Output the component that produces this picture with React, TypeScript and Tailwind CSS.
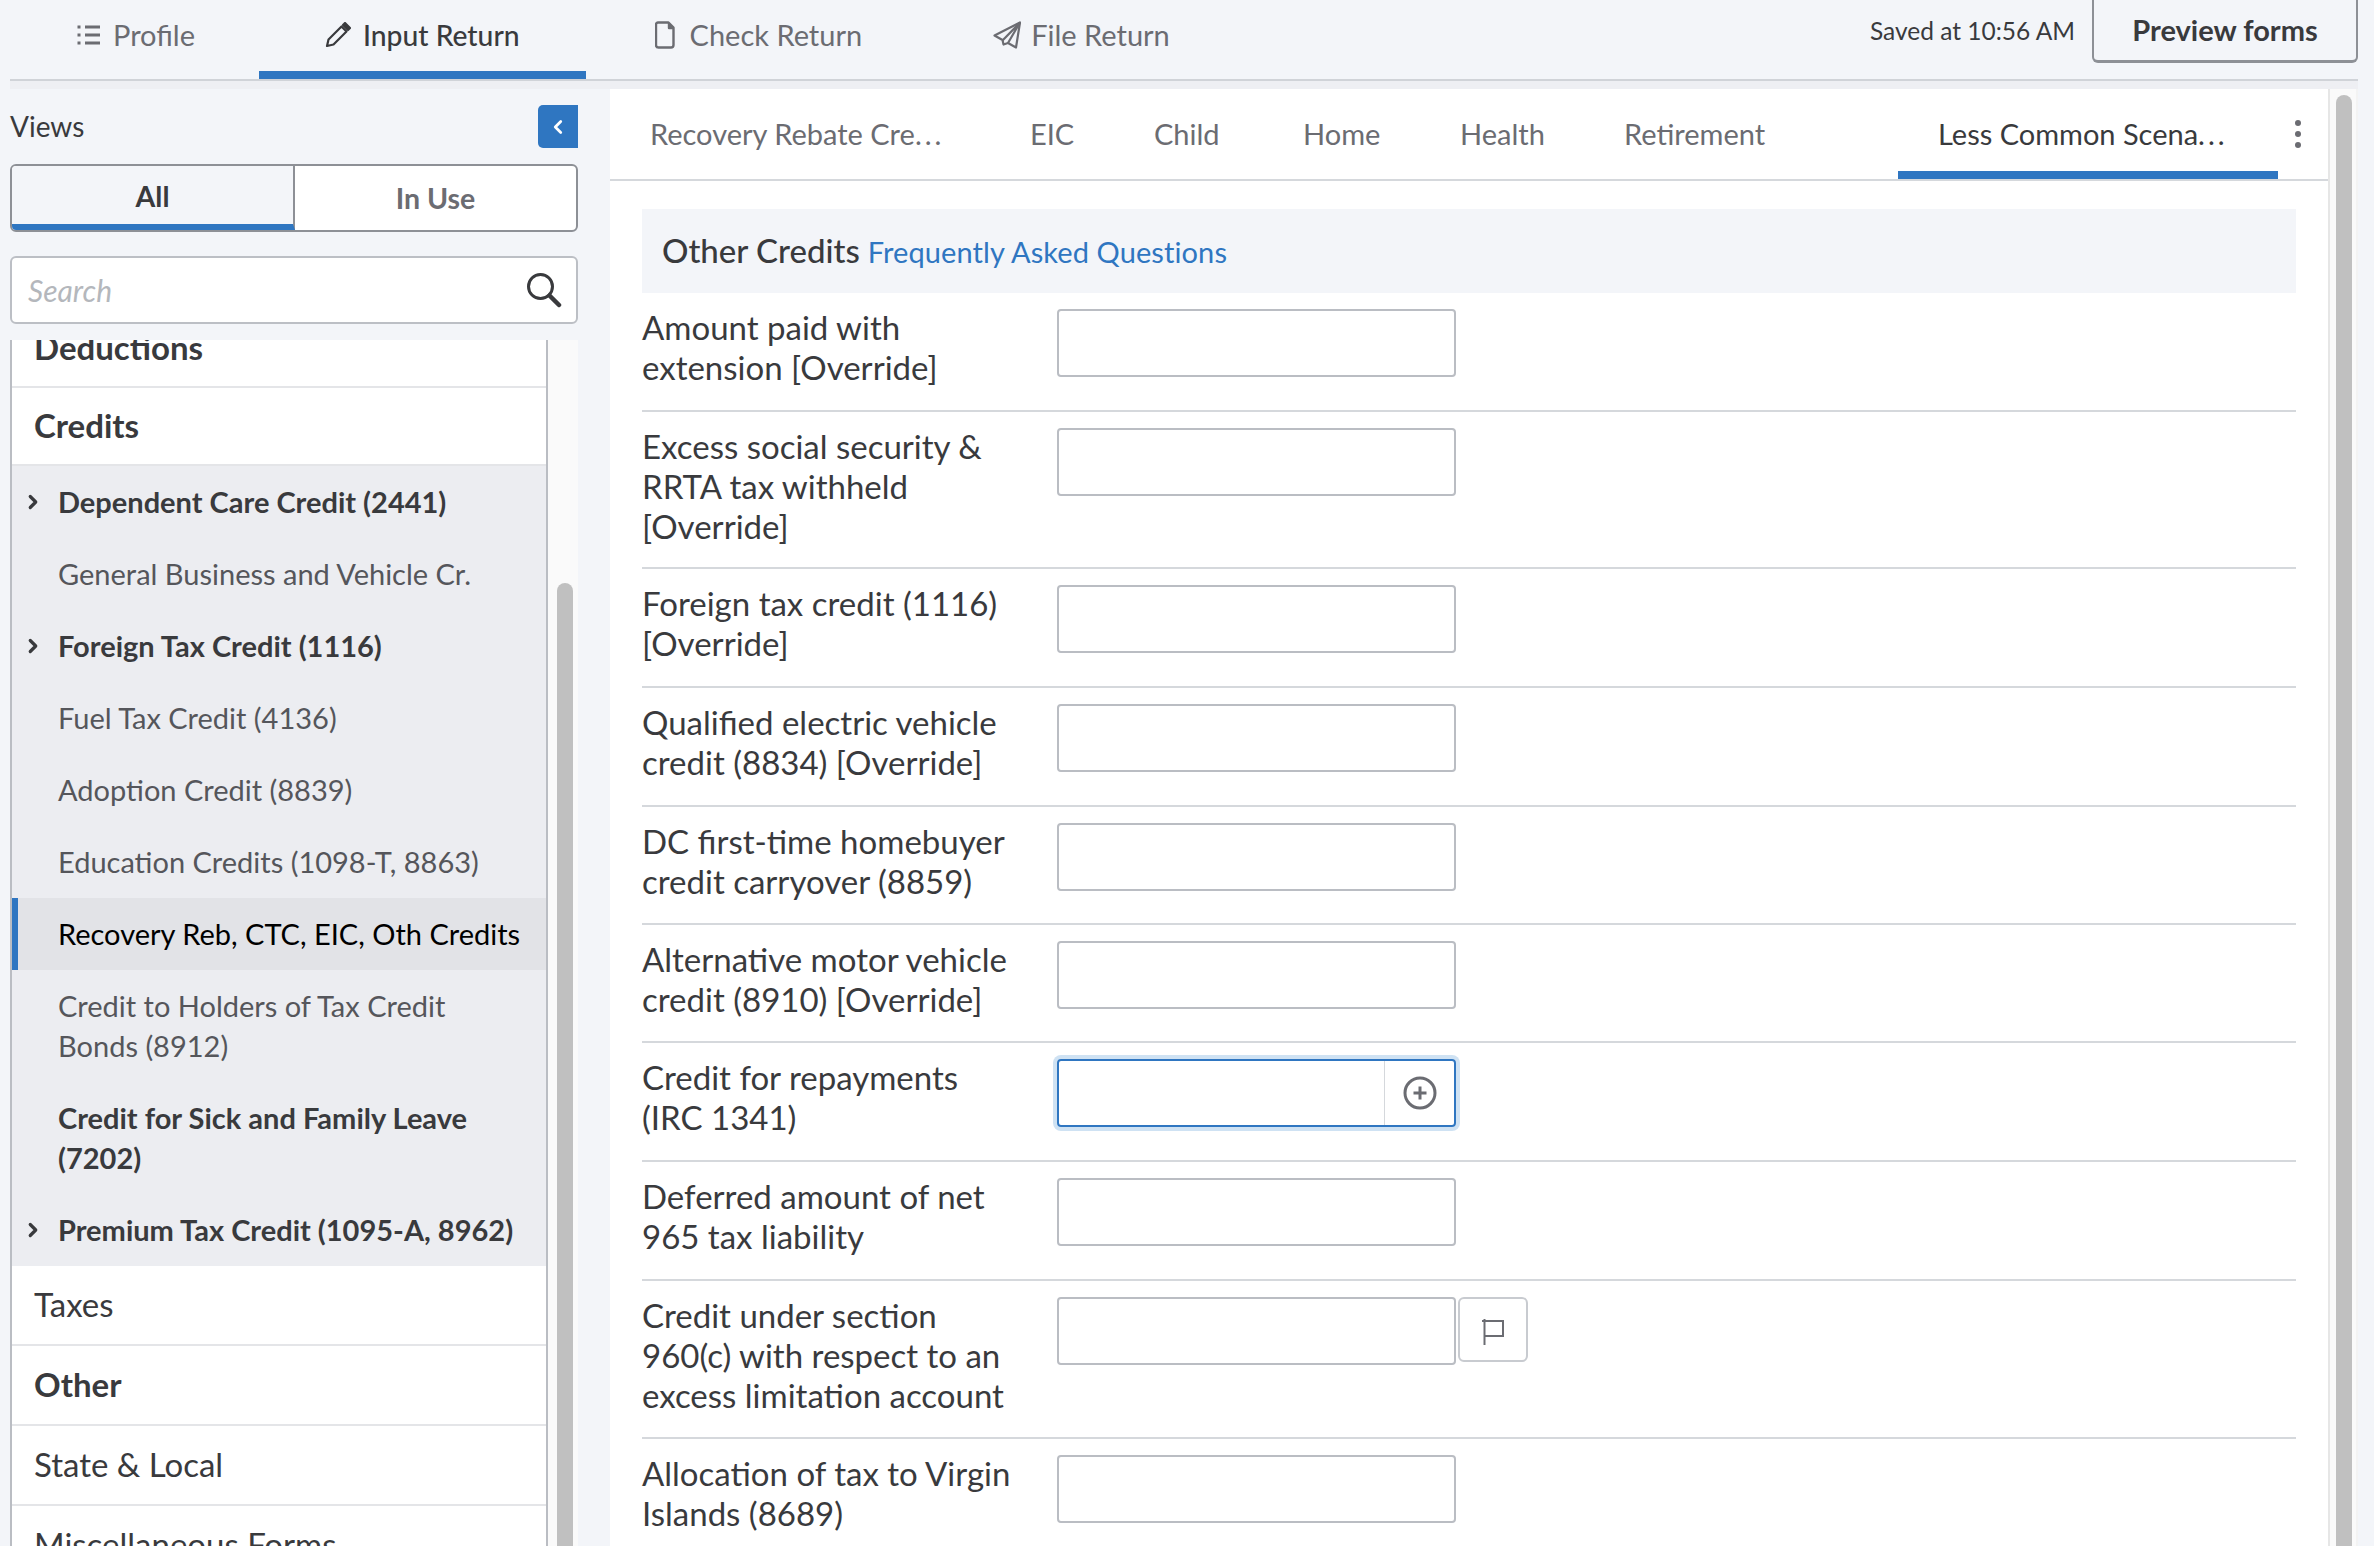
import { ChevronLeft, ChevronRight } from "lucide-react";

const sideItems = [
  { label: "Dependent Care Credit (2441)", bold: true, arrow: true },
  { label: "General Business and Vehicle Cr." },
  { label: "Foreign Tax Credit (1116)", bold: true, arrow: true },
  { label: "Fuel Tax Credit (4136)" },
  { label: "Adoption Credit (8839)" },
  { label: "Education Credits (1098-T, 8863)" },
  { label: "Recovery Reb, CTC, EIC, Oth Credits", active: true },
  { label: "Credit to Holders of Tax Credit\nBonds (8912)" },
  { label: "Credit for Sick and Family Leave\n(7202)", bold: true },
  { label: "Premium Tax Credit (1095-A, 8962)", bold: true, arrow: true },
];

// pad is the bottom padding of the row, the rows in the picture are not all the same height
const formRows = [
  { label: "Amount paid with\nextension [Override]", pad: "pb-[21px]" },
  { label: "Excess social security &\nRRTA tax withheld\n[Override]", pad: "pb-[19px]" },
  { label: "Foreign tax credit (1116)\n[Override]", pad: "pb-[21px]" },
  { label: "Qualified electric vehicle\ncredit (8834) [Override]", pad: "pb-[21px]" },
  { label: "DC first-time homebuyer\ncredit carryover (8859)", pad: "pb-[20px]" },
  { label: "Alternative motor vehicle\ncredit (8910) [Override]", pad: "pb-[20px]" },
  { label: "Credit for repayments\n(IRC 1341)", pad: "pb-[21px]", focused: true },
  { label: "Deferred amount of net\n965 tax liability", pad: "pb-[21px]" },
  { label: "Credit under section\n960(c) with respect to an\nexcess limitation account", pad: "pb-[20px]", flag: true },
  { label: "Allocation of tax to Virgin\nIslands (8689)", pad: "pb-[21px]" },
];

const ListIcon = () => (
  <svg width="24" height="24" viewBox="0 0 24 24" fill="none" stroke="#6b6c72" strokeWidth="3">
    <path d="M8 4h15M8 12h15M8 20h15" />
    <path d="M0.5 4h3M0.5 12h3M0.5 20h3" />
  </svg>
);

const PenIcon = () => (
  <svg width="26" height="26" viewBox="0 0 26 26" fill="none" stroke="#393a3d" strokeWidth="2.2" strokeLinejoin="round">
    <path d="M2 24l1.5-6.5L16.5 4.5l5 5L8.5 22.5z" />
    <path d="M18 3l2-2 5 5-2 2z" fill="#393a3d" />
  </svg>
);

const PageIcon = () => (
  <svg width="20" height="28" viewBox="0 0 20 28" fill="none" stroke="#6b6c72" strokeWidth="2.4" strokeLinejoin="round">
    <path d="M3 1.5h10.5l5 5V24a2.5 2.5 0 0 1-2.5 2.5H3.5A2.5 2.5 0 0 1 1 24V3.5a2 2 0 0 1 2-2z" />
    <path d="M14 2v5h4.5" fill="#6b6c72" />
  </svg>
);

const PlaneIcon = () => (
  <svg width="28" height="28" viewBox="0 0 28 28" fill="none" stroke="#6b6c72" strokeWidth="2.2" strokeLinejoin="round">
    <path d="M1.5 14.5L27 1.5l-4 25-8-4.5-4.5 1.5-1-4.5z" />
    <path d="M27 1.5L9.5 19.5M27 1.5L15 22" />
  </svg>
);

const SearchIcon = () => (
  <svg width="36" height="36" viewBox="0 0 36 36" fill="none" stroke="#393a3d">
    <circle cx="14.5" cy="14.5" r="12" strokeWidth="3" />
    <path d="M23.5 23.5L33 33" strokeWidth="4.5" strokeLinecap="round" />
  </svg>
);

const FlagIcon = () => (
  <svg width="22" height="26" viewBox="0 0 22 26" fill="none" stroke="#6b6c72" strokeWidth="2" className="mt-[5px]">
    <path d="M2.5 0v26" />
    <path d="M0 2h21v15H2.5" />
  </svg>
);

const PlusCircle = () => (
  <svg width="34" height="34" viewBox="0 0 34 34" fill="none" stroke="#6b6c72">
    <circle cx="17" cy="17" r="15" strokeWidth="3" />
    <path d="M17 10.5v13M10.5 17h13" strokeWidth="3" />
  </svg>
);

function TopTab({
  icon,
  label,
  className,
  active,
}: {
  icon: React.ReactNode;
  label: string;
  className: string;
  active?: boolean;
}) {
  return (
    <div
      className={`flex h-[79px] items-start pt-[16px] leading-[38px] ${className} ${
        active ? "border-b-8 border-[#2f76c1] text-[28.25px] font-medium text-[#393a3d]" : "text-[29px] text-[#6b6c72]"
      }`}
    >
      <span className="flex h-[38px] items-center">{icon}</span>
      <span className="whitespace-nowrap">{label}</span>
    </div>
  );
}

function FormTab({ children, className, active }: { children: React.ReactNode; className: string; active?: boolean }) {
  return (
    <div
      className={`h-[90px] shrink-0 pt-[27px] text-[29px] leading-[36px] whitespace-nowrap ${className} ${
        active ? "border-b-8 border-[#2f76c1] text-[#393a3d]" : "text-[#6b6c72]"
      }`}
    >
      {children}
    </div>
  );
}

export default function App() {
  return (
    <div className="h-[1546px] w-[2374px] overflow-hidden bg-[#f3f5f9] font-['Lato',sans-serif] text-[#393a3d]">
      {/* top nav */}
      <header className="ml-[10px] mr-[16px] flex h-[81px] items-start border-b-2 border-[#d0d3d8]">
        <TopTab icon={<ListIcon />} label="Profile" className="gap-[12px] pr-[64px] pl-[67px]" />
        <TopTab icon={<PenIcon />} label="Input Return" className="gap-[12px] px-[66px]" active />
        <TopTab icon={<PageIcon />} label="Check Return" className="gap-[15px] pr-[65px] pl-[69px]" />
        <TopTab icon={<PlaneIcon />} label="File Return" className="gap-[10px] pl-[66px]" />
        <div className="ml-auto flex items-start">
          <span className="mt-[13px] mr-[17px] text-[24.5px] leading-[36px] whitespace-nowrap">Saved at 10:56 AM</span>
          <button className="flex h-[63px] w-[266px] items-center justify-center rounded-b-[6px] border-x-2 border-b-[3px] border-[#8d9096] text-[29px] font-bold">
            Preview forms
          </button>
        </div>
      </header>
      <div className="mr-[16px] ml-[10px] h-[8px] bg-[#eeeff3]" />

      <div className="flex h-[1457px]">
        {/* sidebar */}
        <aside className="flex w-[610px] shrink-0 flex-col pl-[10px] pr-[32px]">
          <div className="mt-[16px] flex h-[43px] items-center justify-between">
            <span className="pb-[2px] text-[28px]">Views</span>
            <button className="flex h-[43px] w-[40px] items-center justify-center rounded-l-[5px] bg-[#2f76c1]">
              <ChevronLeft size={22} color="#ffffff" strokeWidth={3} />
            </button>
          </div>
          <div className="mt-[16px] flex h-[68px] overflow-hidden rounded-[6px] border-2 border-[#8d9096] bg-white text-[28.5px] font-bold">
            <div className="flex w-[283px] items-center justify-center border-r-2 border-b-[6px] border-r-[#8d9096] border-b-[#2f76c1] bg-[#f3f5f9] pt-[3px] text-[#393a3d]">
              All
            </div>
            <div className="flex flex-1 items-center justify-center text-[#6b6c72]">In Use</div>
          </div>
          <div className="mt-[24px] flex h-[68px] items-center justify-between rounded-[6px] border-2 border-[#bcbfc5] bg-white pr-[14px] pl-[16px]">
            <span className="text-[30px] text-[#b4b7bc] italic">Search</span>
            <SearchIcon />
          </div>

          <div className="mt-[16px] flex min-h-0 flex-1">
            <div className="w-[538px] overflow-hidden border-x-2 border-[#babdc3] bg-white">
              <div className="-mt-[31px]">
                <Section label="Deductions" bold className="h-[79px]" />
                <Section label="Credits" bold className="h-[78px]" />
                <div className="bg-[#ecedf1]">
                  {sideItems.map((item) => (
                    <SideRow key={item.label} {...item} />
                  ))}
                </div>
                <Section label="Taxes" className="h-[80px]" />
                <Section label="Other" bold className="h-[80px]" />
                <Section label="State & Local" className="h-[80px]" />
                <Section label="Miscellaneous Forms" className="h-[80px]" />
              </div>
            </div>
            <div className="flex w-[30px] flex-col bg-[#fafafa] pt-[243px] pl-[9px]">
              <div className="h-full w-[16px] rounded-t-full bg-[#c0c0c0]" />
            </div>
          </div>
        </aside>

        {/* form */}
        <main className="min-w-0 flex-1 bg-white">
          <div className="flex h-[92px] border-b-2 border-[#d5d8dc]">
            <FormTab className="w-[380px] pl-[40px]">
              Recovery Rebate Cre<span className="tracking-[3px]">...</span>
            </FormTab>
            <FormTab className="w-[124px] pl-[40px]">EIC</FormTab>
            <FormTab className="w-[149px] pl-[40px]">Child</FormTab>
            <FormTab className="w-[157px] pl-[40px]">Home</FormTab>
            <FormTab className="w-[164px] pl-[40px]">Health</FormTab>
            <FormTab className="w-[314px] pl-[40px]">Retirement</FormTab>
            <FormTab className="w-[380px] pl-[40px]" active>
              Less Common Scena<span className="tracking-[3px]">...</span>
            </FormTab>
            <div className="flex w-[40px] flex-col items-center gap-[5px] pt-[31px]">
              <span className="h-[6px] w-[6px] rounded-full bg-[#6b6c72]" />
              <span className="h-[6px] w-[6px] rounded-full bg-[#6b6c72]" />
              <span className="h-[6px] w-[6px] rounded-full bg-[#6b6c72]" />
            </div>
          </div>
          <div className="mx-[32px] mt-[28px]">
            <div className="flex h-[84px] items-center gap-[8px] bg-[#f3f5f9] pl-[20px]">
              <span className="text-[33px] font-medium">Other Credits</span>
              <span className="mt-[2px] text-[29px] tracking-[0.1px] text-[#2f76c1]">Frequently Asked Questions</span>
            </div>
            {formRows.map((row) => (
              <div key={row.label} className={`flex border-b-2 border-[#d5d8dc] pt-[16px] ${row.pad}`}>
                <div className="-mt-[2px] mb-[2px] w-[415px] shrink-0 text-[33px] leading-[40px] whitespace-pre-line">
                  {row.label}
                </div>
                {row.focused ? (
                  <div className="flex h-[68px] w-[399px] rounded-[4px] border-2 border-[#2f76c1] ring-[4px] ring-[#cfe2f3]">
                    <div className="flex-1" />
                    <div className="flex w-[70px] items-center justify-center border-l border-[#d5d8dc]">
                      <PlusCircle />
                    </div>
                  </div>
                ) : (
                  <div className="h-[68px] w-[399px] rounded-[4px] border-2 border-[#babdc3]" />
                )}
                {row.flag && (
                  <div className="ml-[2px] flex h-[65px] w-[70px] items-center justify-center rounded-[6px] border-2 border-[#c8cbd0]">
                    <FlagIcon />
                  </div>
                )}
              </div>
            ))}
          </div>
        </main>

        <div className="flex w-[30px] shrink-0 border-x-2 border-r-[#f3f3f3] border-l-[#e6e6e6] bg-[#fafafa] pt-[6px] pl-[6px]">
          <div className="h-full w-[16px] rounded-t-full bg-[#c0c0c0]" />
        </div>
        <div className="w-[16px] shrink-0" />
      </div>
    </div>
  );
}

function Section({ label, bold, className }: { label: string; bold?: boolean; className: string }) {
  return (
    <div
      className={`flex items-center border-b-2 border-[#e4e5e8] pl-[22px] text-[33px] ${className} ${
        bold ? "font-bold" : ""
      }`}
    >
      {label}
    </div>
  );
}

function SideRow({ label, bold, arrow, active }: { label: string; bold?: boolean; arrow?: boolean; active?: boolean }) {
  return (
    <div
      className={`relative whitespace-pre-line py-[16px] text-[29px] leading-[40px] ${
        active ? "border-l-[6px] border-[#2f76c1] bg-[#e2e3e7] pl-[40px] text-black" : "pl-[46px]"
      } ${bold ? "font-bold" : ""} ${!active && !bold ? "text-[#55565b]" : ""}`}
    >
      {arrow && <ChevronRight size={22} strokeWidth={3.5} className="absolute top-[25px] left-[10px]" />}
      {label}
    </div>
  );
}
